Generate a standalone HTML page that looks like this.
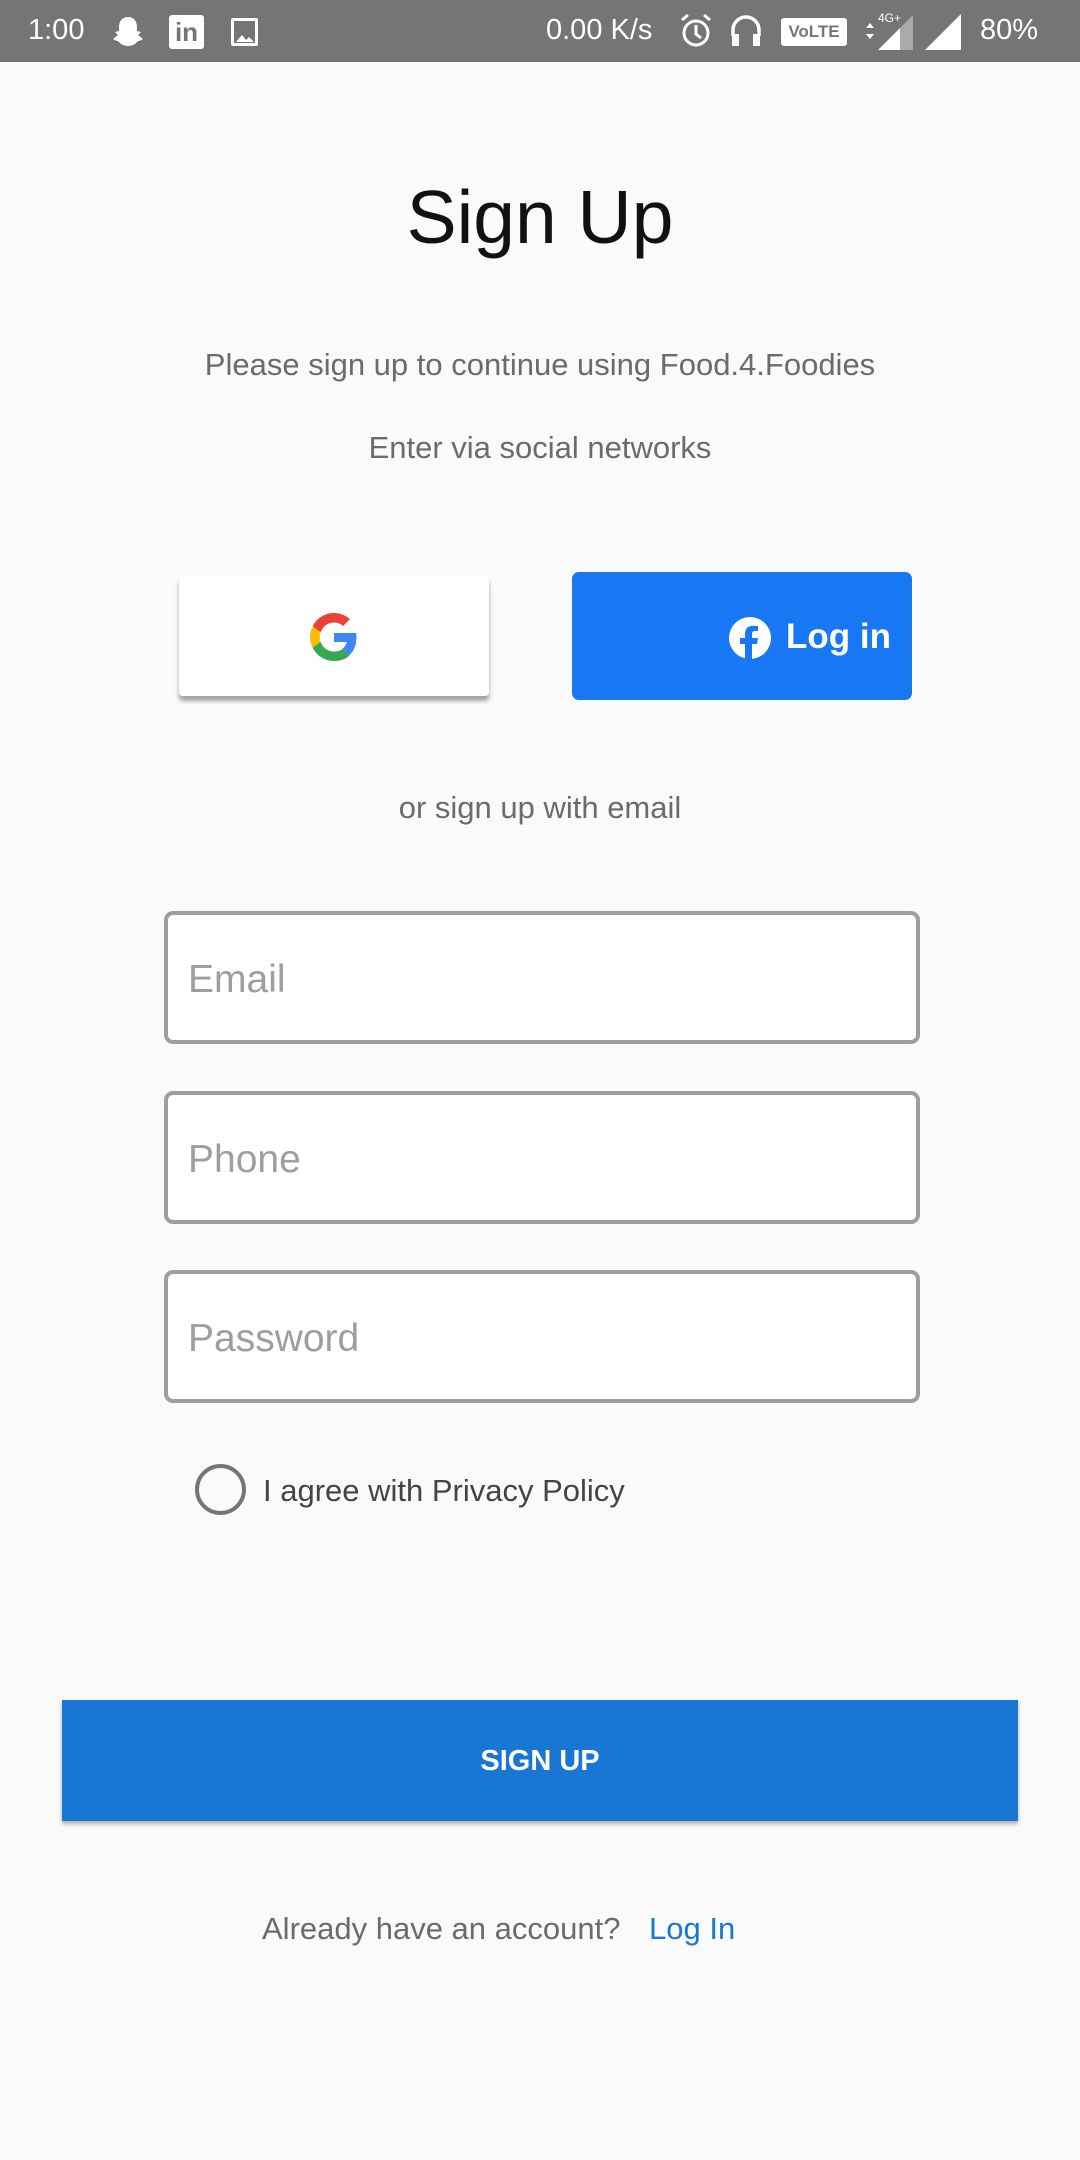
<!DOCTYPE html>
<html><head><meta charset="utf-8"><style>
*{margin:0;padding:0;box-sizing:border-box}
body{width:1080px;height:2160px;background:#fafafa;font-family:"Liberation Sans",sans-serif;position:relative;overflow:hidden}
.abs{position:absolute}
.sb{left:0;top:0;width:1080px;height:62px;background:#757575;color:#fff;font-size:29px}
.c{left:0;width:1080px;text-align:center}
.field{position:absolute;left:164px;width:756px;height:133px;border:4px solid #9e9e9e;border-radius:9px;background:#fff;font-size:39px;color:#9e9e9e;padding-left:20px;line-height:129px}
</style></head><body>
<div class="abs sb">
<span class="abs" style="left:28px;top:14px">1:00</span>
<svg class="abs" style="left:110px;top:15px" width="36" height="34" viewBox="0 0 36 34"><path d="M18 2c-7 0-9 6-9 10v4l-4 1 3 3-5 4c3 2 6 2 7 4 2 2 6 3 8 3s6-1 8-3c1-2 4-2 7-4l-5-4 3-3-4-1v-4c0-4-2-10-9-10z" fill="#fff"/></svg>
<div class="abs" style="left:169px;top:15px;width:35px;height:34px;background:#fff;border-radius:3px;color:#757575;font-weight:bold;font-size:26px;line-height:34px;text-align:center">in</div>
<div class="abs" style="left:231px;top:18px;width:27px;height:28px;border:3px solid #fff;border-radius:2px"><svg width="21" height="22"><path d="M2 18l6-7 4 5 3-3 5 5z" fill="#fff"/></svg></div>
<span class="abs" style="left:546px;top:14px">0.00 K/s</span>
<svg class="abs" style="left:678px;top:12px" width="36" height="38" viewBox="0 0 36 38"><circle cx="18" cy="21" r="12" fill="none" stroke="#fff" stroke-width="3"/><path d="M18 13v9l5 4M4 8l6-5M32 8l-6-5" stroke="#fff" stroke-width="3" fill="none"/></svg>
<svg class="abs" style="left:728px;top:12px" width="36" height="40" viewBox="0 0 36 40"><path d="M5 24v-6a13 13 0 0126 0v6" fill="none" stroke="#fff" stroke-width="3.5"/><rect x="4" y="22" width="7" height="12" fill="#fff"/><rect x="25" y="22" width="7" height="12" fill="#fff"/></svg>
<div class="abs" style="left:781px;top:18px;width:66px;height:28px;background:#fff;border-radius:3px;color:#757575;font-size:17px;font-weight:bold;line-height:28px;text-align:center">VoLTE</div>
<svg class="abs" style="left:860px;top:10px" width="55" height="40"><path d="M6 18l4-5 4 5zM6 24l4 5 4-5z" fill="#fff"/><text x="18" y="12" font-size="12" fill="#fff" font-family="Liberation Sans">4G+</text><path d="M18 40L53 5v35z" fill="#aaa"/><path d="M18 40L40 18v22z" fill="#fff"/></svg>
<svg class="abs" style="left:925px;top:14px" width="38" height="36"><path d="M0 36L36 0v36z" fill="#fff"/></svg>
<span class="abs" style="left:980px;top:14px">80%</span>
</div>
<div class="abs c" style="top:174px;font-size:75px;color:#111">Sign Up</div>
<div class="abs c" style="top:347px;font-size:31px;color:#6b6b6b">Please sign up to continue using Food.4.Foodies</div>
<div class="abs c" style="top:430px;font-size:31px;color:#6b6b6b">Enter via social networks</div>
<div class="abs" style="left:179px;top:576px;width:310px;height:120px;background:#fff;border-radius:4px;box-shadow:0 5px 4px rgba(0,0,0,.35)">
<svg class="abs" style="left:131px;top:37px" width="48" height="48" viewBox="0 0 48 48"><path fill="#EA4335" d="M24 9.5c3.5 0 6.6 1.2 9.1 3.6l6.8-6.8C35.8 2.4 30.3 0 24 0 14.6 0 6.6 5.4 2.7 13.3l7.9 6.2C12.5 13.6 17.8 9.5 24 9.5z"/><path fill="#4285F4" d="M46.5 24.5c0-1.6-.1-3.1-.4-4.5H24v9h12.7c-.6 2.9-2.2 5.4-4.7 7.1l7.6 5.9c4.4-4.1 6.9-10.1 6.9-17.5z"/><path fill="#FBBC05" d="M10.5 28.6c-.5-1.4-.8-3-.8-4.6s.3-3.1.8-4.6l-7.9-6.2C1 16.5 0 20.1 0 24s1 7.5 2.7 10.8l7.8-6.2z"/><path fill="#34A853" d="M24 48c6.5 0 11.9-2.1 15.9-5.8l-7.6-5.9c-2.1 1.4-4.9 2.3-8.3 2.3-6.2 0-11.5-4.2-13.4-9.9l-7.9 6.1C6.6 42.6 14.6 48 24 48z"/></svg>
</div>
<div class="abs" style="left:572px;top:572px;width:340px;height:128px;background:#1877f2;border-radius:7px">
<svg class="abs" style="left:156px;top:44px" width="44" height="44" viewBox="0 0 44 44"><circle cx="22" cy="22" r="21" fill="#fff"/><path d="M24 44V28h5l1-6h-6v-4c0-2 1-3 3-3h3v-5c-1 0-3-.3-5-.3-5 0-8 3-8 8v4.3h-5v6h5v16z" fill="#1877f2"/></svg>
<span class="abs" style="left:214px;top:45px;color:#fff;font-weight:bold;font-size:35px">Log in</span>
</div>
<div class="abs c" style="top:790px;font-size:31px;color:#6b6b6b">or sign up with email</div>
<div class="field" style="top:911px">Email</div>
<div class="field" style="top:1091px">Phone</div>
<div class="field" style="top:1270px">Password</div>
<div class="abs" style="left:195px;top:1464px;width:51px;height:51px;border:4px solid #757575;border-radius:50%"></div>
<div class="abs" style="left:263px;top:1473px;font-size:31px;color:#444">I agree with Privacy Policy</div>
<div class="abs" style="left:62px;top:1700px;width:956px;height:121px;background:#1976d2;box-shadow:0 3px 4px rgba(0,0,0,.3);color:#fff;font-weight:bold;font-size:29px;text-align:center;line-height:123px">SIGN UP</div>
<div class="abs" style="left:262px;top:1911px;font-size:31px;color:#6b6b6b">Already have an account?</div>
<div class="abs" style="left:649px;top:1911px;font-size:31px;color:#1976d2">Log In</div>
</body></html>
